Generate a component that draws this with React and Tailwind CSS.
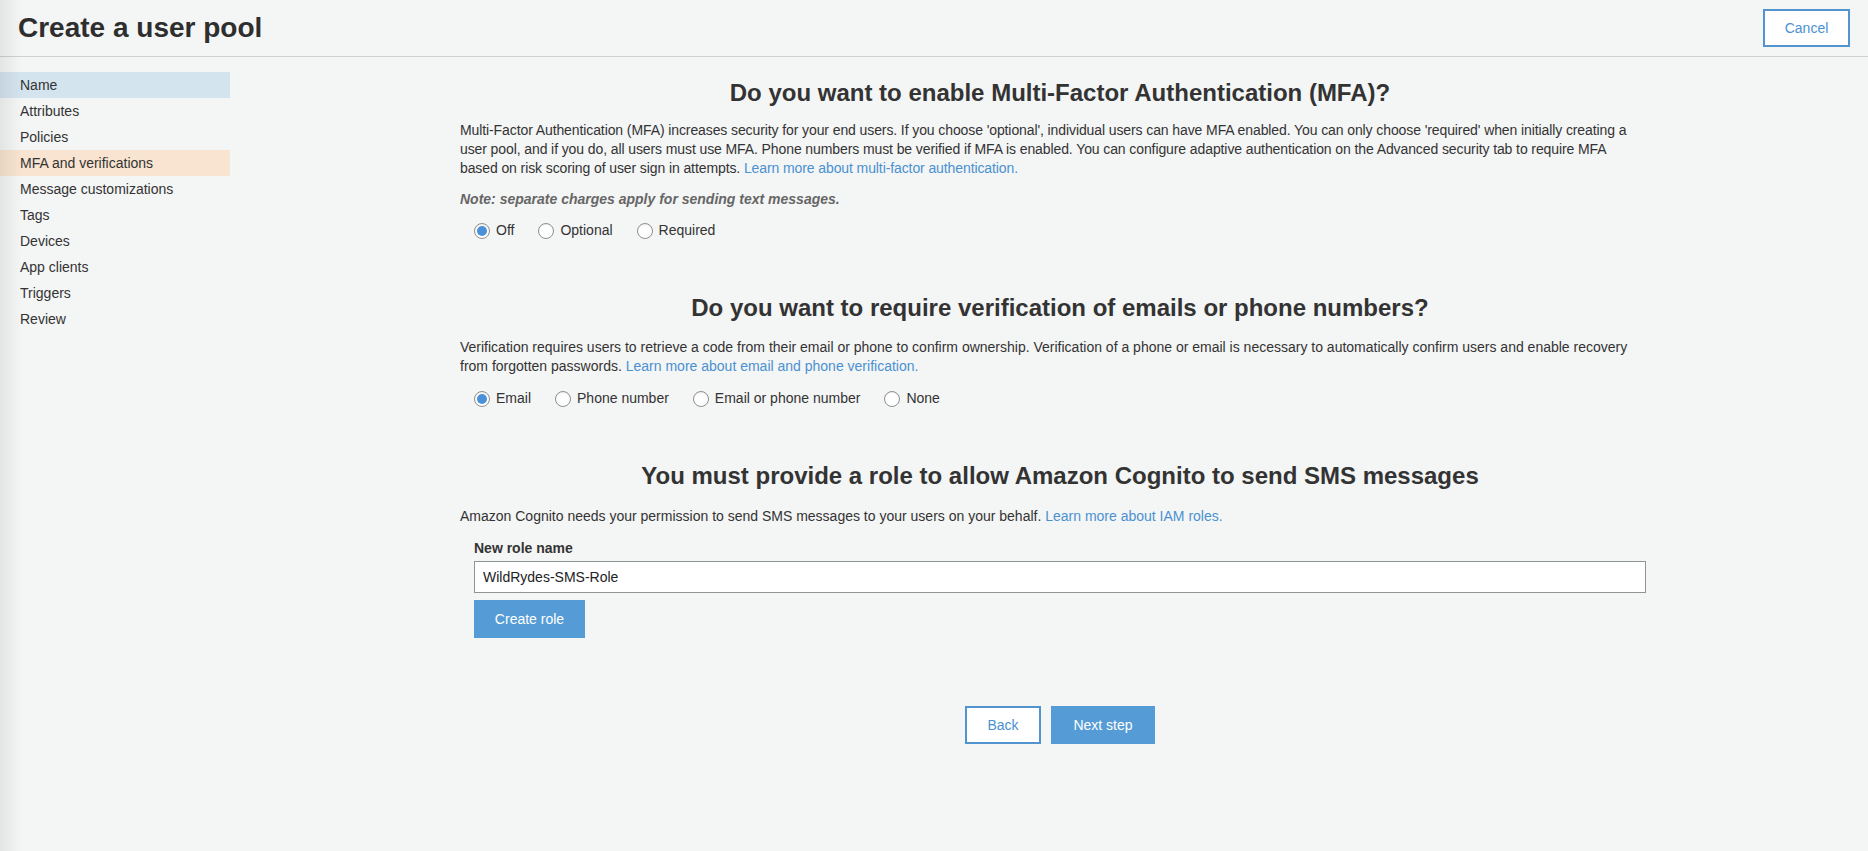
import React, { useState } from 'react';

const navItems = [
  'Name',
  'Attributes',
  'Policies',
  'MFA and verifications',
  'Message customizations',
  'Tags',
  'Devices',
  'App clients',
  'Triggers',
  'Review',
];

const Radio = ({ label, checked, onSelect }) => (
  <button type="button" onClick={onSelect} className="flex items-center gap-[6px] mr-[24px]">
    <span className="w-[16px] h-[16px] rounded-full border border-[#8f8f8f] bg-white flex items-center justify-center shadow-[inset_0_1px_1px_rgba(0,0,0,0.08)]">
      {checked && <span className="w-[10px] h-[10px] rounded-full bg-[#4a90d9]"></span>}
    </span>
    <span className="text-[14px] leading-[19px] text-[#333]">{label}</span>
  </button>
);

const RadioGroup = ({ options, value, onChange, className }) => (
  <div className={`flex items-center pl-[14px] ${className}`}>
    {options.map((opt) => (
      <Radio key={opt} label={opt} checked={value === opt} onSelect={() => onChange(opt)} />
    ))}
  </div>
);

const Heading = ({ children, className }) => (
  <h2 className={`text-center text-[24px] leading-[28px] font-bold text-[#333] ${className}`}>{children}</h2>
);

const Link = ({ children }) => <a href="#" className="text-[#4a91d1]">{children}</a>;

export default function App() {
  const [mfa, setMfa] = useState('Off');
  const [verify, setVerify] = useState('Email');
  const [role, setRole] = useState('WildRydes-SMS-Role');

  return (
    <div
      className="relative min-h-[851px] bg-[#f4f5f5] text-[#333] flex flex-col"
      style={{ fontFamily: '"Liberation Sans", Arial, Helvetica, sans-serif' }}
    >
      {/* left edge shade */}
      <div className="pointer-events-none absolute inset-y-0 left-0 w-[22px] bg-gradient-to-r from-black/[0.07] to-transparent"></div>

      {/* Header */}
      <div className="h-[57px] border-b border-[#cfd1d1] flex items-center justify-between pl-[18px] pr-[18px]">
        <h1 className="text-[28px] font-bold text-[#2e2e2e] leading-none">Create a user pool</h1>
        <button className="w-[87px] h-[38px] border-2 border-[#5294d0] bg-white text-[14px] text-[#4a91d1]">
          Cancel
        </button>
      </div>

      <div className="flex flex-1">
        {/* Sidebar */}
        <div className="w-[230px] pt-[15px] shrink-0">
          {navItems.map((item) => (
            <div
              key={item}
              className={`h-[26px] flex items-center pl-[20px] text-[14px] text-[#333] ${
                item === 'Name' ? 'bg-[#d4e4ef]' : item === 'MFA and verifications' ? 'bg-[#f8e4d0] text-[#111]' : ''
              }`}
            >
              {item}
            </div>
          ))}
        </div>

        {/* Main */}
        <div className="ml-[230px] w-[1200px] shrink-0 pt-[22px]">
          <Heading>Do you want to enable Multi-Factor Authentication (MFA)?</Heading>
          <p className="mt-[14px] text-[14px] tracking-[-0.1px] leading-[19px] text-[#333] whitespace-nowrap">
            Multi-Factor Authentication (MFA) increases security for your end users. If you choose 'optional', individual
            users can have MFA enabled. You can only choose 'required' when initially creating a
            <br />
            user pool, and if you do, all users must use MFA. Phone numbers must be verified if MFA is enabled. You can
            configure adaptive authentication on the Advanced security tab to require MFA
            <br />
            based on risk scoring of user sign in attempts. <Link>Learn more about multi-factor authentication.</Link>
          </p>
          <p className="mt-[12px] text-[14px] leading-[19px] font-bold italic text-[#666]">
            Note: separate charges apply for sending text messages.
          </p>
          <RadioGroup
            className="mt-[12px]"
            options={['Off', 'Optional', 'Required']}
            value={mfa}
            onChange={setMfa}
          />

          <Heading className="mt-[54px]">Do you want to require verification of emails or phone numbers?</Heading>
          <p className="mt-[16px] text-[14px] leading-[19px] text-[#333] whitespace-nowrap">
            Verification requires users to retrieve a code from their email or phone to confirm ownership. Verification of a
            phone or email is necessary to automatically confirm users and enable recovery
            <br />
            from forgotten passwords. <Link>Learn more about email and phone verification.</Link>
          </p>
          <RadioGroup
            className="mt-[13px]"
            options={['Email', 'Phone number', 'Email or phone number', 'None']}
            value={verify}
            onChange={setVerify}
          />

          <Heading className="mt-[54px]">You must provide a role to allow Amazon Cognito to send SMS messages</Heading>
          <p className="mt-[17px] text-[14px] leading-[19px] text-[#333]">
            Amazon Cognito needs your permission to send SMS messages to your users on your behalf.{' '}
            <Link>Learn more about IAM roles.</Link>
          </p>

          <div className="px-[14px]">
            <label className="block mt-[13px] text-[14px] leading-[19px] font-bold text-[#333]">New role name</label>
            <input
              value={role}
              onChange={(e) => setRole(e.target.value)}
              className="mt-[3px] block w-full h-[32px] bg-white border border-[#8e9396] px-[8px] text-[14px] text-[#222] outline-none"
            />
            <button className="mt-[7px] w-[111px] h-[38px] bg-[#559cd6] text-white text-[14px]">Create role</button>
          </div>

          <div className="mt-[68px] flex justify-center gap-[10px]">
            <button className="w-[76px] h-[38px] border-2 border-[#5294d0] bg-white text-[14px] text-[#4a91d1]">
              Back
            </button>
            <button className="w-[104px] h-[38px] bg-[#559cd6] text-white text-[14px]">Next step</button>
          </div>
        </div>
      </div>
    </div>
  );
}
